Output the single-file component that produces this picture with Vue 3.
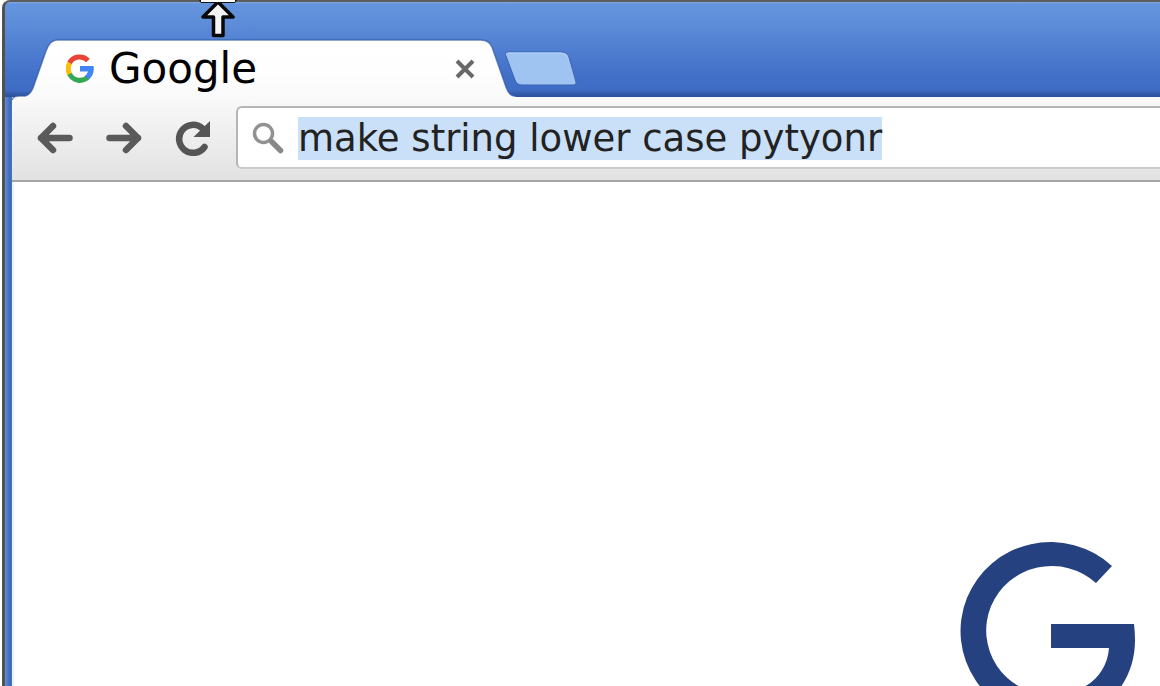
<script setup>
import { onMounted, ref } from 'vue'

const query = ref('make string lower case pytyonr')
const address = ref(null)

onMounted(() => {
  address.value.focus()
  address.value.select()
})
</script>

<template>
  <div class="desktop">
    <main class="window">
      <header class="titlebar">
        <div class="tab">
          <svg class="tab-shape" width="504" height="62" viewBox="0 0 504 62" aria-hidden="true">
            <defs>
              <linearGradient id="tabFill" x1="0" y1="0" x2="0" y2="1">
                <stop offset="0" stop-color="#ffffff" />
                <stop offset="0.5" stop-color="#fefefe" />
                <stop offset="1" stop-color="#f9f9f9" />
              </linearGradient>
            </defs>
            <path d="M0 61 Q1 56 7 56 L13 56 Q18 55 21 48 L34 11 Q38 0 45 0 H469 Q477 0 480 7 L494 47 Q497 56 502 56 L504 57 V62 H0 Z" fill="url(#tabFill)" />
            <path d="M0 60 Q1 56 7 56 L13 56 Q18 55 21 48 L34 11 Q38 0 45 0 H469 Q477 0 480 7 L494 47 Q497 56 503 56" fill="none" stroke="#315aa8" stroke-opacity="0.7" stroke-width="1.500" />
          </svg>
          <svg class="favicon" width="28" height="30" viewBox="0 0 28 30" aria-hidden="true">
            <g fill="none" stroke-width="5">
              <path d="M3.500 9 A11.500 11.500 0 0 1 22 6.500" stroke="#ea4335" />
              <path d="M3.800 20.500 A11.500 11.500 0 0 1 3.800 9" stroke="#fbbc05" />
              <path d="M3.600 20 A11.500 11.500 0 0 0 22 23" stroke="#34a853" />
            </g>
            <path d="M14 12 H27.500 Q29 20 23 25.500 L19 22 Q21 20.500 22 17.500 H14 Z" fill="#4285f4" />
          </svg>
          <span class="tab-title">Google</span>
          <button class="close" type="button" aria-label="Close tab">
            <svg width="20" height="20" viewBox="0 0 20 20"><path d="M2 2 L18 18 M18 2 L2 18" stroke="#686868" stroke-width="4" /></svg>
          </button>
        </div>
        <button class="new-tab" type="button" aria-label="New tab">
          <svg width="74" height="36" viewBox="0 0 74 36">
            <path d="M4 1 H57 Q63 1 65 6 L72 31 Q73 34 70 34 H18 Q13 34 11 29 L2 5 Q0 1 4 1 Z" fill="#a0c4f2" stroke="#3965b3" stroke-width="1" />
            <path d="M4 2 H57 Q62 2 64 6" fill="none" stroke="#b7d4f8" stroke-width="1" />
          </svg>
        </button>
      </header>

      <nav class="toolbar" aria-label="Navigation">
        <button class="tool" type="button" aria-label="Back">
          <svg width="38" height="34" viewBox="0 0 38 34">
            <path d="M17 5 L5 17 L17 29 M5 17 H33.500" fill="none" stroke="#5a5a5a" stroke-width="6.500" stroke-linecap="round" stroke-linejoin="round" />
          </svg>
        </button>
        <button class="tool" type="button" aria-label="Forward">
          <svg width="38" height="34" viewBox="0 0 38 34">
            <path d="M21 5 L33 17 L21 29 M33 17 H4.500" fill="none" stroke="#5a5a5a" stroke-width="6.500" stroke-linecap="round" stroke-linejoin="round" />
          </svg>
        </button>
        <button class="tool" type="button" aria-label="Reload">
          <svg width="38" height="36" viewBox="0 0 38 36">
            <path d="M28 8 A14 14 0 1 0 30.500 27" fill="none" stroke="#555" stroke-width="6.500" stroke-linecap="round" />
            <path d="M36 1 V17 H19.500 Z" fill="#555" />
          </svg>
        </button>
        <label class="omnibox">
          <svg width="32" height="32" viewBox="0 0 32 32" role="img" aria-label="Search">
            <circle cx="11.500" cy="11.500" r="9" fill="none" stroke="#929292" stroke-width="3.500" />
            <path d="M20 20 L28.500 28.500" stroke="#888" stroke-width="5.500" stroke-linecap="round" />
          </svg>
          <input ref="address" v-model="query" type="text" spellcheck="false" aria-label="Address and search" />
        </label>
      </nav>

      <section class="page">
        <svg class="logo" width="176" height="180" viewBox="0 0 176 180" role="img" aria-label="Google logo">
          <path d="M152 24 A90 89 0 1 0 90 178 C143 178 175 143 175 98 Q175 90 174 82 H91 V106 H149 C147 134 124 153 90 153 A65.500 64.500 0 1 1 136 41 Z" fill="#264180" />
        </svg>
      </section>
    </main>

    <svg class="pointer" width="44" height="40" viewBox="0 0 44 40" aria-hidden="true">
      <path d="M22 2 L37 17 H27 V35.500 H17.500 V17 H7 Z" fill="#f5f5f5" stroke="#080808" stroke-width="3.500" stroke-linejoin="round" />
      <path d="M3 0 H41 L39 3 H5 Z" fill="#111" />
      <path d="M5 0 H39 V2 H5 Z" fill="#fff" />
    </svg>
  </div>
</template>

<style>
body {
  margin: 0;
  background: #fff;
}
</style>

<style scoped>
.desktop {
  position: relative;
  box-sizing: border-box;
  height: 100vh;
  padding-left: 2px;
  overflow: hidden;
  font-family: "DejaVu Sans", sans-serif;
}

.window {
  display: flex;
  flex-direction: column;
  box-sizing: border-box;
  height: 100%;
  padding-left: 7px;
  border-top: 2px solid #5c5e5e;
  border-left: 3px solid #50524e;
  border-top-left-radius: 8px;
  background: linear-gradient(90deg, #648fd6 0, #4775c9 3px, #3c66b5 6px, #5d7fbb 7px);
}

button {
  display: flex;
  padding: 0;
  border: 0;
  background: none;
}

.titlebar {
  display: flex;
  align-items: flex-end;
  height: 95px;
  flex: none;
  margin-left: -7px;
  padding-left: 7px;
  box-sizing: border-box;
  border-top-left-radius: 5px;
  background: linear-gradient(#86aae0 0, #6494de 2px, #6392dc 10px, #416fc8 75px, #3f6cc5 88px, #2d529c 94px);
}

.tab {
  position: relative;
  display: flex;
  align-items: center;
  flex: none;
  box-sizing: border-box;
  width: 492px;
  height: 57px;
  padding: 0 29px 0 54px;
}

.tab-shape {
  position: absolute;
  top: 0;
  left: 0;
  overflow: visible;
}

.favicon {
  position: relative;
  flex: none;
}

.tab-title {
  position: relative;
  flex: 1;
  margin-left: 15px;
  font-size: 42px;
  line-height: 56px;
  color: #000;
}

.close {
  position: relative;
}

.new-tab {
  position: relative;
  padding-bottom: 10px;
}

.toolbar {
  display: flex;
  align-items: center;
  flex: none;
  box-sizing: border-box;
  height: 85px;
  padding: 0 0 2px 24px;
  border-bottom: 2px solid #a5a5a5;
  background: linear-gradient(#f9f9f9, #e2e2e2);
}

.tool {
  flex: none;
  justify-content: center;
  width: 38px;
  margin-right: 31px;
}

.tool:nth-of-type(3) {
  margin-right: 24px;
}

.omnibox {
  display: flex;
  align-items: center;
  flex: 1;
  box-sizing: border-box;
  height: 63px;
  padding-left: 14px;
  border: 2px solid #b5b5b5;
  border-bottom-color: #cacaca;
  border-right: 0;
  border-radius: 6px 0 0 6px;
  background: #fff;
}

.omnibox svg {
  flex: none;
}

.omnibox input {
  flex: 1;
  min-width: 0;
  height: 46px;
  margin-left: 14px;
  padding: 1px 0 0;
  box-sizing: border-box;
  border: 0;
  outline: 0;
  background: transparent;
  font-family: "DejaVu Sans", sans-serif;
  font-size: 37px;
  line-height: 45px;
  color: #222;
}

.omnibox input::selection {
  background: #c9e0f8;
  color: #222;
}

.page {
  display: flex;
  justify-content: flex-end;
  align-items: flex-start;
  flex: 1;
  min-height: 0;
  padding: 360px 24px 0 0;
  border-left: 2px solid #edf0f5;
  background: #fff;
  overflow: hidden;
}

.logo {
  flex: none;
}

.pointer {
  position: absolute;
  top: 0;
  left: 196px;
}
</style>
